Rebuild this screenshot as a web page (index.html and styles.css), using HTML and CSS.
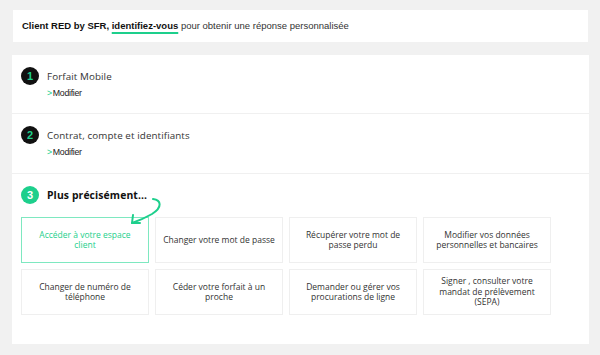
FILE: index.html
```html
<!DOCTYPE html>
<html lang="fr">
<head>
<meta charset="utf-8">
<link rel="stylesheet" href="styles.css">
</head>
<body>
<div class="page">
  <div class="topbar">
    <strong>Client RED by SFR,</strong> <a class="login">identifiez-vous</a> pour obtenir une réponse personnalisée
  </div>
  <div class="card">
    <div class="step">
      <div class="step-head">
        <span class="num dark">1</span>
        <span class="step-title">Forfait Mobile</span>
      </div>
      <a class="modify"><span class="chev">&gt;</span>Modifier</a>
    </div>
    <div class="step">
      <div class="step-head">
        <span class="num dark">2</span>
        <span class="step-title">Contrat, compte et identifiants</span>
      </div>
      <a class="modify"><span class="chev">&gt;</span>Modifier</a>
    </div>
    <div class="step step-last">
      <div class="step-head">
        <span class="num green">3</span>
        <span class="step-title bold">Plus précisément...</span>
      </div>
      <svg class="arrow" width="40" height="40" viewBox="0 0 40 40">
        <path d="M28 9 C36 10 38 17 27 24 C20 28 13 31 7 33" fill="none" stroke="#1dcf8c" stroke-width="2" stroke-linecap="round"/>
        <path d="M8 25 L7 33 L15 33" fill="none" stroke="#1dcf8c" stroke-width="2" stroke-linecap="round" stroke-linejoin="round"/>
      </svg>
      <div class="grid">
        <div class="opt active">Accéder à votre espace client</div>
        <div class="opt">Changer votre mot de passe</div>
        <div class="opt">Récupérer votre mot de passe perdu</div>
        <div class="opt">Modifier vos données personnelles et bancaires</div>
        <div class="opt">Changer de numéro de téléphone</div>
        <div class="opt">Céder votre forfait à un proche</div>
        <div class="opt">Demander ou gérer vos procurations de ligne</div>
        <div class="opt">Signer , consulter votre mandat de prélèvement (SEPA)</div>
      </div>
    </div>
  </div>
</div>
</body>
</html>
```

FILE: styles.css
```css
* { box-sizing: border-box; }
html, body { margin: 0; padding: 0; }
body {
  background: #f1f1f1;
  width: 600px;
  height: 355px;
  overflow: hidden;
}
.page {
  padding: 10px 11px 0 12px;
  display: flex;
  flex-direction: column;
  gap: 13px;
}
.topbar {
  background: #fff;
  height: 32px;
  margin-left: 1px;
  margin-right: 1px;
  padding: 9px 0 0 9px;
  font-family: "Liberation Sans", Arial, sans-serif;
  font-size: 9.5px;
  color: #333;
  line-height: 13px;
}
.topbar strong { color: #111; }
.login {
  color: #111;
  font-weight: bold;
  text-decoration: underline;
  text-decoration-color: #1dcf8c;
  text-decoration-thickness: 1.5px;
  text-underline-offset: 3px;
}
.card {
  background: #fff;
  height: 289px;
  font-family: "Open Sans", sans-serif;
}
.step {
  border-bottom: 1px solid #f0f0f0;
  padding: 12px 9px 0 9px;
  height: 60px;
}
.step:first-child { height: 59px; }
.step-last {
  border-bottom: none;
  height: auto;
  position: relative;
}
.step-head {
  display: flex;
  align-items: center;
  gap: 8px;
  height: 18px;
}
.num {
  width: 18px;
  height: 18px;
  border-radius: 50%;
  display: flex;
  align-items: center;
  justify-content: center;
  font-family: "Liberation Sans", Arial, sans-serif;
  font-weight: bold;
  font-size: 11px;
}
.num.dark { background: #111; color: #1dcf8c; }
.num.green { background: #1dcf8c; color: #fff; }
.step-title {
  font-size: 9.8px;
  color: #333;
  letter-spacing: 0.1px;
}
.step-title.bold {
  font-size: 10.4px;
  font-weight: bold;
  color: #111;
}
.modify {
  display: block;
  margin-top: 3px;
  margin-left: 26px;
  font-family: "Liberation Sans", Arial, sans-serif;
  font-size: 8.8px;
  color: #222;
  letter-spacing: -0.3px;
}
.chev {
  color: #1dcf8c;
  margin-right: 1px;
}
.arrow {
  position: absolute;
  left: 113px;
  top: 16px;
}
.grid {
  margin-top: 13px;
  display: grid;
  grid-template-columns: repeat(4, 128px);
  grid-auto-rows: 46px;
  gap: 6px;
}
.opt {
  border: 1px solid #efefef;
  display: flex;
  align-items: center;
  justify-content: center;
  text-align: center;
  padding: 0 5px;
  font-size: 8.5px;
  line-height: 10.5px;
  color: #333;
}
.opt.active {
  border: 1px solid #7ee8c0;
  color: #1dcf8c;
  padding: 0 14px;
}
```
